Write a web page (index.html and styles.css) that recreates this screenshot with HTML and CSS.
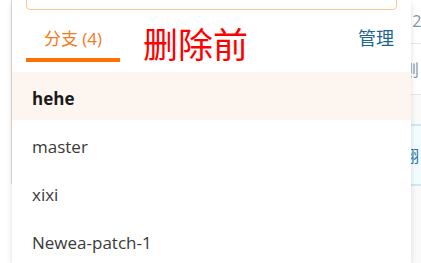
FILE: index.html
```html
<!DOCTYPE html>
<html lang="zh-CN">
<head>
<meta charset="utf-8">
<title>分支</title>
<link rel="stylesheet" href="styles.css">
</head>
<body>
<div class="page">
  <div class="gutter"></div>
  <div class="main"></div>
  <div class="side">
    <div class="side-row side-row-first"><span class="side-text">12</span></div>
    <div class="side-row"><span class="side-text">则</span></div>
    <div class="side-box"><span class="side-text side-link">翔</span></div>
  </div>
</div>

<div class="panel">
  <div class="search"></div>
  <div class="tabbar">
    <div class="tab tab-active">分支 (4)</div>
    <div class="note">删除前</div>
    <div class="manage">管理</div>
  </div>
  <ul class="list">
    <li class="item item-current">hehe</li>
    <li class="item">master</li>
    <li class="item">xixi</li>
    <li class="item">Newea-patch-1</li>
  </ul>
</div>
</body>
</html>
```

FILE: styles.css
```css
html, body {
  margin: 0;
  padding: 0;
}
body {
  width: 421px;
  height: 263px;
  overflow: hidden;
  background: #fff;
  position: relative;
  font-family: "Segoe UI", "Open Sans", "Noto Sans CJK SC", sans-serif;
}

/* background page */
.page {
  display: flex;
  height: 263px;
}
.gutter {
  width: 11px;
  height: 184px;
  border-right: 1px solid #dcdcdc;
  flex: none;
}
.main {
  flex: 1;
}
.side {
  width: 20px;
  flex: none;
  display: flex;
  flex-direction: column;
  background: #fafafa;
}
.side-row {
  height: 44px;
  border-bottom: 1px solid #e6e8ea;
  display: flex;
  align-items: center;
  padding-left: 2px;
  background: #fff;
}
.side-row-first {
  align-items: flex-start;
  padding-top: 10px;
  box-sizing: border-box;
}
.side-row + .side-row {
  height: 50px;
}
.side-text {
  font-size: 16px;
  color: #8796a5;
  white-space: nowrap;
}
.side-box {
  margin-top: 29px;
  height: 58px;
  border-top: 2px solid #cfe9ef;
  border-bottom: 2px solid #cfe9ef;
  background: #f2fbfd;
  display: flex;
  align-items: center;
  padding-left: 2px;
}
.side-link {
  color: #2a77a8;
}

/* dropdown panel overlay */
.panel {
  position: absolute;
  left: 12px;
  top: 0;
  width: 399px;
  height: 263px;
  background: #fff;
  box-shadow: 0 2px 6px rgba(0, 0, 0, 0.13);
}
.search {
  height: 30px;
  margin: -20px 14px 0;
  border: 1px solid #ffc68f;
  border-radius: 4px;
  box-sizing: border-box;
}
.tabbar {
  display: flex;
  align-items: flex-start;
  height: 52px;
  padding: 0 17px 0 14px;
}
.tab {
  width: 94px;
  box-sizing: border-box;
  padding: 17px 0 7px;
  line-height: 24px;
  font-size: 17px;
  text-align: center;
  color: #f37b1d;
}
.tab-active {
  border-bottom: 4px solid #ff7100;
}
.note {
  margin: 15px 0 0 23px;
  font-size: 35px;
  line-height: 35px;
  color: #ff0000;
  font-family: "Noto Sans CJK SC", sans-serif;
}
.manage {
  margin: 16px 0 0 auto;
  font-size: 18px;
  line-height: 24px;
  color: #1d6690;
}
.list {
  list-style: none;
  margin: 10px 0 0;
  padding: 0;
}
.item {
  height: 48px;
  box-sizing: border-box;
  padding: 3px 0 0 20px;
  line-height: 48px;
  font-size: 17px;
  color: #3a3a3a;
}
.item-current {
  background: #fdf5f0;
  font-weight: bold;
  color: #1a1a1a;
}
```
